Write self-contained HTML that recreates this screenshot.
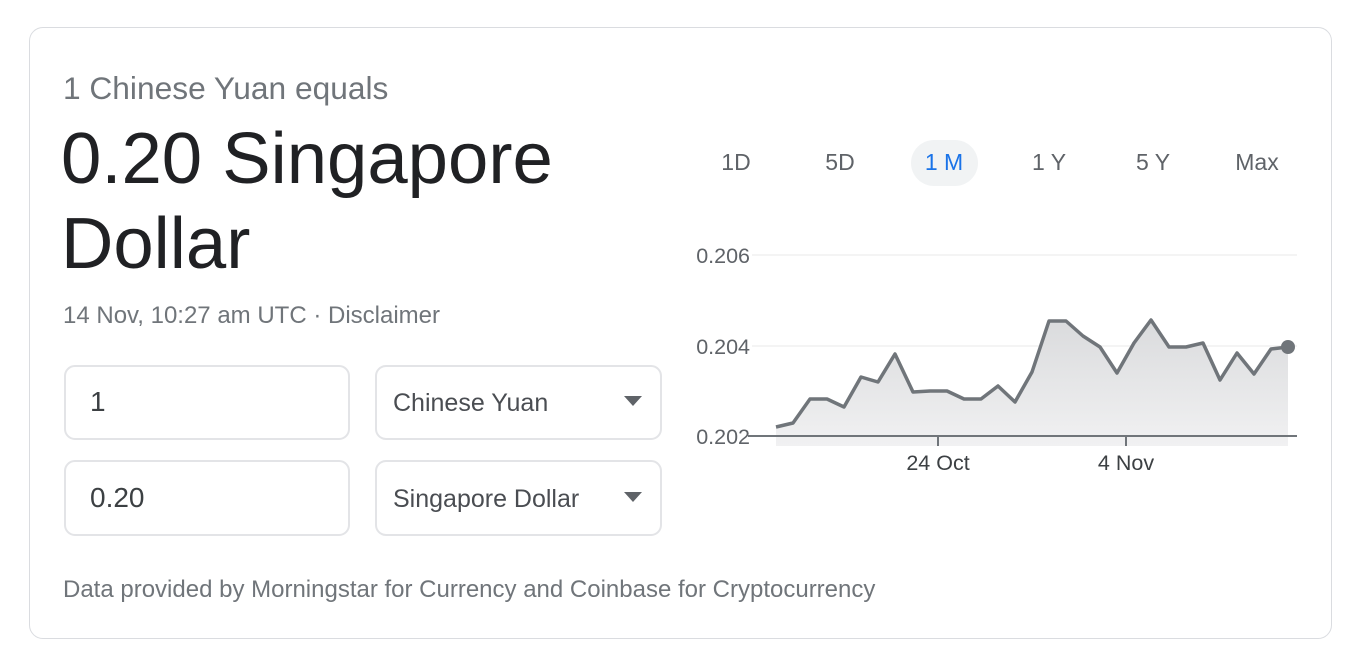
<!DOCTYPE html>
<html><head><meta charset="utf-8"><style>
html,body{margin:0;padding:0;background:#fff;width:1370px;height:658px;overflow:hidden;font-family:"Liberation Sans",Arial,sans-serif;}
.card{position:absolute;left:29px;top:27px;width:1303px;height:612px;border:1px solid #dadce0;border-radius:14px;box-sizing:border-box;}
.t{position:absolute;white-space:nowrap;}
.box{position:absolute;border:2px solid #e3e4e7;border-radius:11px;box-sizing:border-box;}
.tri{position:absolute;width:0;height:0;border-left:9px solid transparent;border-right:9px solid transparent;border-top:10px solid #5f6368;}
.tab{position:absolute;top:149px;font-size:23px;color:#5f6368;transform:translateX(-50%);}
</style></head><body>
<div class="card"></div>
<div class="t" style="left:63px;top:70px;font-size:31.7px;color:#70757a;">1 Chinese Yuan equals</div>
<div class="t" style="left:61px;top:116px;font-size:72.5px;line-height:85px;color:#202124;">0.20 Singapore<br>Dollar</div>
<div class="t" style="left:63px;top:302px;font-size:24px;color:#70757a;">14 Nov, 10:27 am UTC · Disclaimer</div>

<div class="box" style="left:64px;top:365px;width:286px;height:75px;"></div>
<div class="t" style="left:90px;top:386px;font-size:28px;color:#3c4043;">1</div>
<div class="box" style="left:375px;top:365px;width:287px;height:75px;"></div>
<div class="t" style="left:393px;top:389px;font-size:25px;color:#4a4d52;">Chinese Yuan</div>
<div class="tri" style="left:624px;top:396px;"></div>

<div class="box" style="left:64px;top:460px;width:286px;height:76px;"></div>
<div class="t" style="left:90px;top:482px;font-size:28px;color:#3c4043;">0.20</div>
<div class="box" style="left:375px;top:460px;width:287px;height:76px;"></div>
<div class="t" style="left:393px;top:485px;font-size:25px;color:#4a4d52;">Singapore Dollar</div>
<div class="tri" style="left:624px;top:492px;"></div>

<div class="t" style="left:63px;top:576px;font-size:24px;color:#70757a;">Data provided by Morningstar for Currency and Coinbase for Cryptocurrency</div>

<div style="position:absolute;left:911px;top:140px;width:67px;height:46px;border-radius:23px;background:#f1f3f4;"></div>
<div class="tab" style="left:736px;">1D</div>
<div class="tab" style="left:840px;">5D</div>
<div class="tab" style="left:944px;color:#1a73e8;">1 M</div>
<div class="tab" style="left:1049px;">1 Y</div>
<div class="tab" style="left:1153px;">5 Y</div>
<div class="tab" style="left:1257px;">Max</div>

<svg style="position:absolute;left:0;top:0" width="1370" height="658">
<defs><linearGradient id="g" x1="0" y1="0" x2="0" y2="1"><stop offset="0" stop-color="#dadbdd"/><stop offset="1" stop-color="#f1f1f2"/></linearGradient></defs>
<line x1="752" y1="255" x2="1297" y2="255" stroke="#f0f0f0" stroke-width="1.5"/>
<line x1="752" y1="346" x2="1297" y2="346" stroke="#f0f0f0" stroke-width="1.5"/>
<g font-size="21.5" fill="#5f6368" text-anchor="end" font-family="Liberation Sans,Arial,sans-serif">
<text x="750" y="263">0.206</text>
<text x="750" y="354">0.204</text>
<text x="750" y="444">0.202</text>
</g>
<polygon fill="url(#g)" points="776,446 776,427 793,423 810,399 827,399 844,407 861,377 878,382 895,354 913,392 930,391 947,391 964,399 981,399 998,386 1015,402 1032,372 1049,321 1066,321 1083,336 1100,347 1117,373 1134,343 1151,320 1169,347 1186,347 1203,343 1220,380 1237,353 1254,374 1271,349 1288,347 1288,446"/>
<line x1="748" y1="436" x2="1297" y2="436" stroke="#70757a" stroke-width="2"/>
<line x1="938" y1="436" x2="938" y2="446" stroke="#70757a" stroke-width="2"/>
<line x1="1126" y1="436" x2="1126" y2="446" stroke="#70757a" stroke-width="2"/>
<polyline fill="none" stroke="#70757a" stroke-width="3.5" stroke-linejoin="round" points="776,427 793,423 810,399 827,399 844,407 861,377 878,382 895,354 913,392 930,391 947,391 964,399 981,399 998,386 1015,402 1032,372 1049,321 1066,321 1083,336 1100,347 1117,373 1134,343 1151,320 1169,347 1186,347 1203,343 1220,380 1237,353 1254,374 1271,349 1288,347"/>
<circle cx="1288" cy="347" r="7" fill="#70757a"/>
<text x="938" y="470" font-size="21.5" fill="#3c4043" text-anchor="middle" font-family="Liberation Sans,Arial,sans-serif">24 Oct</text>
<text x="1126" y="470" font-size="21.5" fill="#3c4043" text-anchor="middle" font-family="Liberation Sans,Arial,sans-serif">4 Nov</text>
</svg>
</body></html>
